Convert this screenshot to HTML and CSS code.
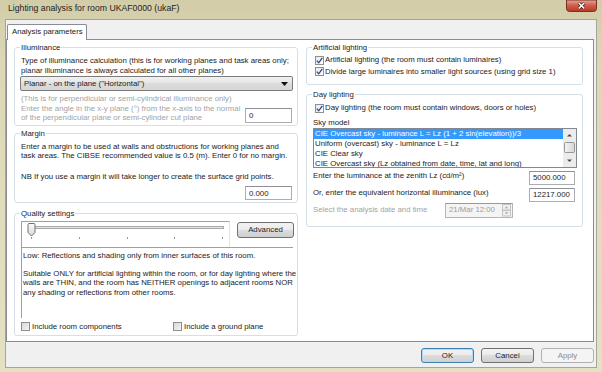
FILE: index.html
```html
<!DOCTYPE html>
<html lang="en">
<head>
  <meta charset="UTF-8">
  <meta name="viewport" content="width=device-width, initial-scale=1.0">
  <title>Lighting analysis for room UKAF0000 (ukaF)</title>
  <link rel="stylesheet" href="styles.css">
</head>
<body>

<div class="window">

  <!-- Title bar -->
  <div class="titlebar">
    <span class="title">Lighting analysis for room UKAF0000 (ukaF)</span>
    <svg class="close-btn" width="31" height="12" viewBox="0 0 31 12">
      <defs>
        <linearGradient id="closeGrad" x1="0" y1="0" x2="0" y2="1">
          <stop offset="0" stop-color="#e3a79b"/>
          <stop offset="0.45" stop-color="#d0614d"/>
          <stop offset="1" stop-color="#b9361f"/>
        </linearGradient>
      </defs>
      <path d="M0.5 0 V8.5 Q0.5 11.5 3.5 11.5 H27.5 Q30.5 11.5 30.5 8.5 V0 Z" fill="url(#closeGrad)" stroke="#7a3024"/>
      <path d="M12.8 3 L18.2 8.4 M18.2 3 L12.8 8.4" stroke="#4d1d15" stroke-width="3"/>
      <path d="M12.8 3 L18.2 8.4 M18.2 3 L12.8 8.4" stroke="#ffffff" stroke-width="1.5"/>
    </svg>
  </div>

  <div class="client">
    <div class="tabs">
      <div class="tab">Analysis parameters</div>
    </div>

    <div class="tab-page">

      <!-- Left column -->
      <div class="col">
        <fieldset class="group illum">
          <legend>Illuminance</legend>
          <p>Type of illuminance calculation (this is for working planes and task areas only;<br>planar illuminance is always calculated for all other planes)</p>
          <div class="combo">
            <span>Planar - on the plane ("Horizontal")</span>
            <svg width="7" height="4" viewBox="0 0 7 4"><polygon points="0,0 7,0 3.5,4" fill="#111"/></svg>
          </div>
          <p class="muted spaced">(This is for perpendicular or semi-cylindrical illuminance only)</p>
          <div class="field-row">
            <p class="muted">Enter the angle in the x-y plane (°) from the x-axis to the normal<br>of the perpendicular plane or semi-cylinder cut plane</p>
            <div class="textbox">0</div>
          </div>
        </fieldset>

        <fieldset class="group margin">
          <legend>Margin</legend>
          <p>Enter a margin to be used at walls and obstructions for working planes and<br>task areas. The CIBSE recommended value is 0.5 (m). Enter 0 for no margin.</p>
          <p class="nb">NB If you use a margin it will take longer to create the surface grid points.</p>
          <div class="textbox right">0.000</div>
        </fieldset>

        <fieldset class="group quality">
          <legend>Quality settings</legend>
          <div class="quality-row">
            <div class="slider">
              <svg width="207" height="25" viewBox="0 0 207 25">
                <defs>
                  <linearGradient id="thumbGrad" x1="0" y1="0" x2="0" y2="1">
                    <stop offset="0" stop-color="#fbfbfb"/>
                    <stop offset="1" stop-color="#d9d9d9"/>
                  </linearGradient>
                </defs>
                <rect x="6.5" y="4.5" width="195" height="2" fill="#e4e4e4" stroke="#a9a9a9"/>
                <path d="M7 1.5 H12 Q13 1.5 13 2.5 V10.5 L9.5 14 L6 10.5 V2.5 Q6 1.5 7 1.5 Z" fill="url(#thumbGrad)" stroke="#707070"/>
                <path d="M9.5 15 V17 M57.5 15 V17 M105.5 15 V17 M152.5 15 V17 M200.5 15 V17" stroke="#9a9a9a"/>
              </svg>
            </div>
            <button class="btn advanced">Advanced</button>
          </div>
          <div class="quality-note">
            <p>Low: Reflections and shading only from inner surfaces of this room.</p>
            <p class="note-gap">Suitable ONLY for artificial lighting within the room, or for day lighting where the<br>walls are THIN, and the room has NEITHER openings to adjacent rooms NOR<br>any shading or reflections from other rooms.</p>
          </div>
          <div class="check-row">
            <label class="check wide"><span class="cb"></span>Include room components</label>
            <label class="check"><span class="cb"></span>Include a ground plane</label>
          </div>
        </fieldset>
      </div>

      <!-- Right column -->
      <div class="col">
        <fieldset class="group artificial">
          <legend>Artificial lighting</legend>
          <label class="check indent">
            <span class="cb on"><svg width="7" height="7" viewBox="0 0 7 7"><path d="M0.8 3.6 L2.7 5.8 L6.3 0.8" fill="none" stroke="#33467a" stroke-width="1.3"/></svg></span>
            Artificial lighting (the room must contain luminaires)
          </label>
          <label class="check indent second">
            <span class="cb on"><svg width="7" height="7" viewBox="0 0 7 7"><path d="M0.8 3.6 L2.7 5.8 L6.3 0.8" fill="none" stroke="#33467a" stroke-width="1.3"/></svg></span>
            Divide large luminaires into smaller light sources (using grid size 1)
          </label>
        </fieldset>

        <fieldset class="group daylight">
          <legend>Day lighting</legend>
          <label class="check indent">
            <span class="cb on"><svg width="7" height="7" viewBox="0 0 7 7"><path d="M0.8 3.6 L2.7 5.8 L6.3 0.8" fill="none" stroke="#33467a" stroke-width="1.3"/></svg></span>
            Day lighting (the room must contain windows, doors or holes)
          </label>
          <p class="sky-label">Sky model</p>
          <div class="listbox">
            <ul>
              <li class="selected">CIE Overcast sky - luminance L = Lz (1 + 2 sin(elevation))/3</li>
              <li>Uniform (overcast) sky - luminance L = Lz</li>
              <li>CIE Clear sky</li>
              <li>CIE Overcast sky (Lz obtained from date, time, lat and long)</li>
            </ul>
            <svg class="scrollbar" width="13" height="38" viewBox="0 0 13 38">
              <defs>
                <linearGradient id="sbThumb" x1="0" y1="0" x2="1" y2="0">
                  <stop offset="0" stop-color="#f4f4f4"/>
                  <stop offset="1" stop-color="#d6d6d6"/>
                </linearGradient>
              </defs>
              <rect x="0" y="0" width="13" height="38" fill="#ececec"/>
              <polygon points="4,7.5 6.5,5 9,7.5" fill="#4a4a4a"/>
              <rect x="1.5" y="13.5" width="10" height="10" rx="1" fill="url(#sbThumb)" stroke="#979797"/>
              <polygon points="4,30.5 9,30.5 6.5,33" fill="#4a4a4a"/>
            </svg>
          </div>
          <div class="value-row">
            <span>Enter the luminance at the zenith Lz (cd/m²)</span>
            <div class="textbox small">5000.000</div>
          </div>
          <div class="value-row">
            <span>Or, enter the equivalent horizontal illuminance (lux)</span>
            <div class="textbox small">12217.000</div>
          </div>
          <div class="value-row date-row">
            <span class="muted date-label">Select the analysis date and time</span>
            <div class="datepicker">
              <span>21/Mar 12:00</span>
              <svg width="9" height="13" viewBox="0 0 9 13">
                <rect x="0.5" y="0.5" width="8" height="5.5" fill="#f0f0f0" stroke="#c4c4c4"/>
                <rect x="0.5" y="6.5" width="8" height="5.5" fill="#f0f0f0" stroke="#c4c4c4"/>
                <polygon points="2.8,4.2 4.5,2.3 6.2,4.2" fill="#a8a8a8"/>
                <polygon points="2.8,8.3 6.2,8.3 4.5,10.2" fill="#a8a8a8"/>
              </svg>
            </div>
          </div>
        </fieldset>
      </div>

    </div>

    <!-- Dialog buttons -->
    <div class="dialog-buttons">
      <button class="btn default">OK</button>
      <button class="btn">Cancel</button>
      <button class="btn disabled">Apply</button>
    </div>
  </div>

</div>

</body>
</html>
```

FILE: styles.css
```css
* {
  box-sizing: border-box;
}

body {
  margin: 0;
  font-family: "Liberation Sans", Arial, sans-serif;
  font-size: 7.8px;
  line-height: 9.5px;
  color: #1b1b1b;
}

p {
  margin: 0;
}

/* Window frame */
.window {
  width: 602px;
  height: 372px;
  display: flex;
  flex-direction: column;
  padding: 0 5px 4px;
  background: linear-gradient(to bottom, #d2cca8 0, #dcd8b6 60px, #e4e1c4 100%);
}

.titlebar {
  height: 19px;
  display: flex;
  justify-content: space-between;
  align-items: flex-start;
}
.titlebar .title {
  font-size: 8.7px;
  line-height: 10px;
  padding: 3px 0 0 3px;
  color: #1e1e1e;
}
.close-btn {
  display: block;
}

/* Client area */
.client {
  flex: 1;
  display: flex;
  flex-direction: column;
  background: #f0f0f0;
  border: 1px solid #a6a597;
  padding: 4px 2px 4px 0;
}

.tabs {
  display: flex;
  height: 16px;
  margin-bottom: -1px;
  padding-left: 1px;
}
.tab {
  position: relative;
  z-index: 1;
  width: 80px;
  height: 16px;
  background: #ffffff;
  border: 1px solid #898c95;
  border-bottom: none;
  border-radius: 2px 2px 0 0;
  padding: 2px 0 0 4px;
  white-space: nowrap;
}

.tab-page {
  flex: 1;
  background: #ffffff;
  border: 1px solid #898c95;
  display: grid;
  grid-template-columns: 284px 277px;
  column-gap: 8px;
  align-items: start;
  padding: 3px 0 0 7px;
  white-space: nowrap;
}

.col {
  display: flex;
  flex-direction: column;
}

/* Group boxes */
.group {
  margin: 0;
  min-width: 0;
  border: 1px solid #d5dfe5;
  border-radius: 3px;
  padding: 3px 5px 2px 6px;
}
.group legend {
  padding: 0 1px;
  margin-left: -1px;
  line-height: 9.5px;
}

.muted {
  color: #a3a3a3;
}

/* Illuminance */
.illum {
  padding-top: 3.5px;
}
.combo {
  margin: 1px 0 0 -1px;
  width: 273px;
  height: 15px;
  border: 1px solid #7b7b7b;
  border-radius: 2px;
  background: linear-gradient(to bottom, #f1f1f1, #e4e4e4 50%, #dcdcdc 50%, #d6d6d6);
  display: flex;
  align-items: center;
  justify-content: space-between;
  padding: 0 4px 0 3px;
}
.spaced {
  margin-top: 3px;
}
.field-row {
  display: flex;
  justify-content: space-between;
  align-items: flex-end;
}

.textbox {
  width: 47px;
  height: 15px;
  border: 1px solid #abadb3;
  border-top-color: #8f9096;
  background: #ffffff;
  padding: 2px 0 0 3px;
  line-height: 9.5px;
}
.textbox.right {
  align-self: flex-end;
  margin-top: 5px;
  height: 14px;
  padding-top: 1.5px;
}
.textbox.small {
  width: 46px;
  height: 14px;
  padding-top: 1.5px;
  margin-right: 2px;
}

/* Margin */
.margin {
  margin-top: 3.5px;
  display: flex;
  flex-direction: column;
}
.nb {
  margin-top: 11px;
}

/* Quality */
.quality {
  margin-top: 6px;
  padding-top: 2px;
  padding-bottom: 3px;
}
.quality-row {
  display: flex;
  align-items: flex-start;
  gap: 7px;
}
.slider {
  width: 209px;
  height: 26px;
  border-top: 1px solid #a0a0a0;
  border-left: 1px solid #a0a0a0;
  border-right: 1px solid #e2e2e2;
  background: #ffffff;
}
.slider svg {
  display: block;
}

.btn {
  font: inherit;
  color: #1b1b1b;
  padding: 0;
  width: 53px;
  height: 15px;
  line-height: 13px;
  border: 1px solid #707070;
  border-radius: 3px;
  background: linear-gradient(to bottom, #f2f2f2, #ebebeb 50%, #dddddd 50%, #cfcfcf);
}
.btn.advanced {
  width: 57px;
  height: 16px;
  margin-top: 1px;
  margin-right: -2px;
}
.btn.default {
  border-color: #3c7fb1;
  box-shadow: inset 0 0 0 1px #a8dcf7;
}
.btn.disabled {
  color: #8a8a8a;
  border-color: #adb2b5;
  background: #f4f4f4;
}

.quality-note {
  width: 272px;
  height: 71px;
  border-top: 1px solid #a0a0a0;
  border-left: 1px solid #a0a0a0;
  padding: 3px 0 0 1px;
}
.note-gap {
  margin-top: 8.5px;
}

.check-row {
  display: flex;
  margin-top: 4px;
}

.check {
  display: flex;
  align-items: center;
  gap: 2px;
  height: 10px;
}
.check.wide {
  width: 152px;
}
.check.indent {
  margin-left: 2px;
  gap: 1px;
}
.cb {
  width: 9px;
  height: 9px;
  border: 1px solid #8e8f8f;
  background: linear-gradient(135deg, #d8d8d8, #f4f4f4);
  display: flex;
  align-items: center;
  justify-content: center;
}
.cb.on {
  background: linear-gradient(135deg, #e6e9ee, #ffffff);
}
.cb svg {
  display: block;
}

/* Artificial lighting */
.artificial {
  padding-top: 2.5px;
  padding-bottom: 7.5px;
}
.check.second {
  margin-top: 1.5px;
}

/* Day lighting */
.daylight {
  margin-top: 5px;
  padding-top: 3.5px;
  padding-bottom: 8px;
}
.sky-label {
  margin-top: 5px;
}

.listbox {
  display: flex;
  height: 40px;
  border: 1px solid #828790;
  background: #ffffff;
  overflow: hidden;
}
.listbox ul {
  flex: 1;
  min-width: 0;
  margin: 0;
  padding: 0;
  list-style: none;
}
.listbox li {
  height: 10px;
  line-height: 10px;
  padding-left: 1px;
}
.listbox li.selected {
  background: #3399ff;
  color: #ffffff;
}
.scrollbar {
  display: block;
  flex-shrink: 0;
}

.value-row {
  display: flex;
  justify-content: space-between;
  align-items: flex-start;
  margin-top: 3px;
}
.date-row {
  justify-content: flex-start;
  align-items: center;
  margin-top: 1px;
}
.date-label {
  width: 132px;
}
.datepicker {
  width: 68px;
  height: 15px;
  border: 1px solid #b5b5b5;
  border-top-color: #9a9a9a;
  background: #f4f4f4;
  color: #9d9d9d;
  display: flex;
  align-items: center;
  justify-content: space-between;
  padding: 0 1px 0 3px;
}
.datepicker svg {
  display: block;
}

/* Bottom buttons */
.dialog-buttons {
  display: flex;
  justify-content: flex-end;
  gap: 7px;
  margin-top: 6px;
}
```
